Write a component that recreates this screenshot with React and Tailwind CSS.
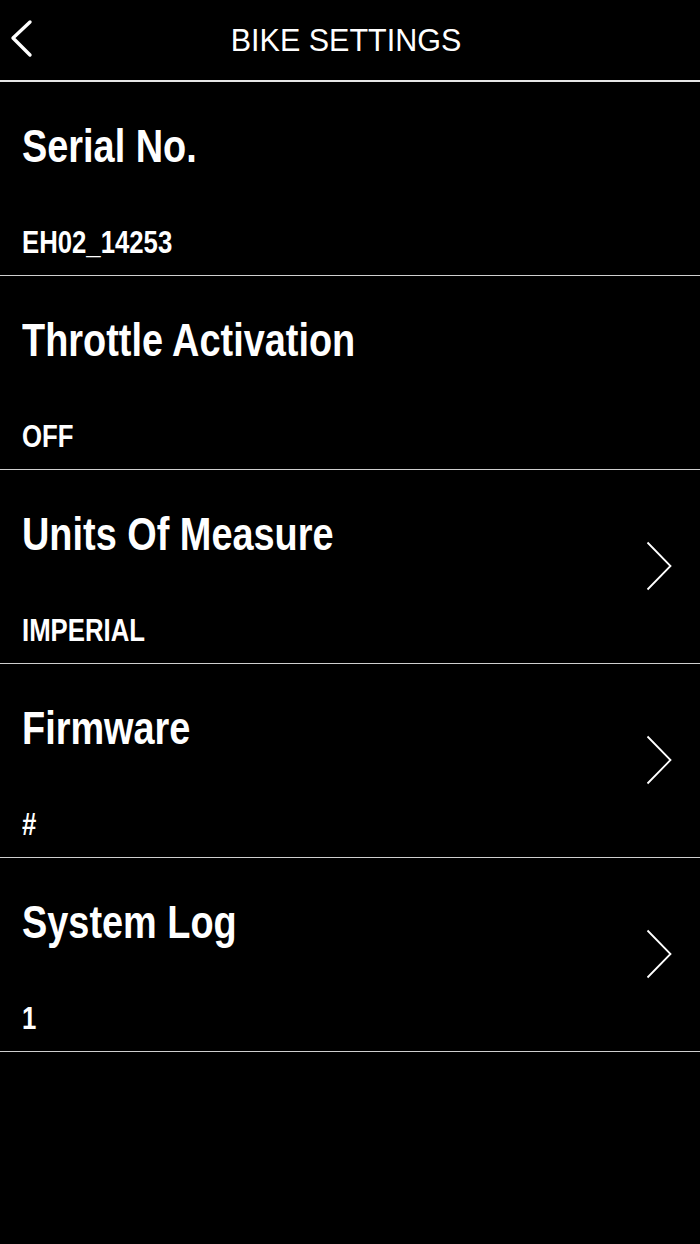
import React from "react";

const rows = [
  { title: "Serial No.", value: "EH02_14253", chevron: false },
  { title: "Throttle Activation", value: "OFF", chevron: false },
  { title: "Units Of Measure", value: "IMPERIAL", chevron: true },
  { title: "Firmware", value: "#", chevron: true },
  { title: "System Log", value: "1", chevron: true },
];

const sans = { fontFamily: '"Liberation Sans", Arial, sans-serif' };

export default function App() {
  return (
    <div className="w-[700px] h-[1244px] bg-black text-white overflow-hidden" style={sans}>
      <header className="relative h-[82px] border-b-2 border-[#e6e6e6] flex items-center justify-center">
        <button className="absolute left-[8px] top-[18px] w-[30px] h-[42px] flex items-center justify-center">
          <svg width="30" height="42" viewBox="0 0 30 42">
            <path d="M22 4 L5 20 L22 37" fill="none" stroke="white" strokeWidth="3.4" strokeLinecap="round" strokeLinejoin="round" />
          </svg>
        </button>
        <h1 className="text-[30.5px] leading-[30px] font-normal -mt-[1px] mr-[8px]">BIKE SETTINGS</h1>
      </header>
      <div>
        {rows.map((r) => (
          <div key={r.title} className="h-[194px] border-b border-[#cfcfcf] flex items-center justify-between pl-[22px] pr-[28px]">
            <div className="self-stretch flex flex-col items-start pt-[40px]">
              <div className="text-[47px] leading-[47px] font-bold whitespace-nowrap origin-left scale-x-[0.806]">{r.title}</div>
              <div className="text-[31px] leading-[31px] font-bold mt-[58px] whitespace-nowrap origin-left scale-x-[0.83]">{r.value}</div>
            </div>
            {r.chevron && (
              <svg width="26" height="50" viewBox="0 0 26 50" className="mt-[-2px]">
                <path d="M1.5 1.5 L24.5 25 L1.5 48.5" fill="none" stroke="white" strokeWidth="1.8" />
              </svg>
            )}
          </div>
        ))}
      </div>
    </div>
  );
}
